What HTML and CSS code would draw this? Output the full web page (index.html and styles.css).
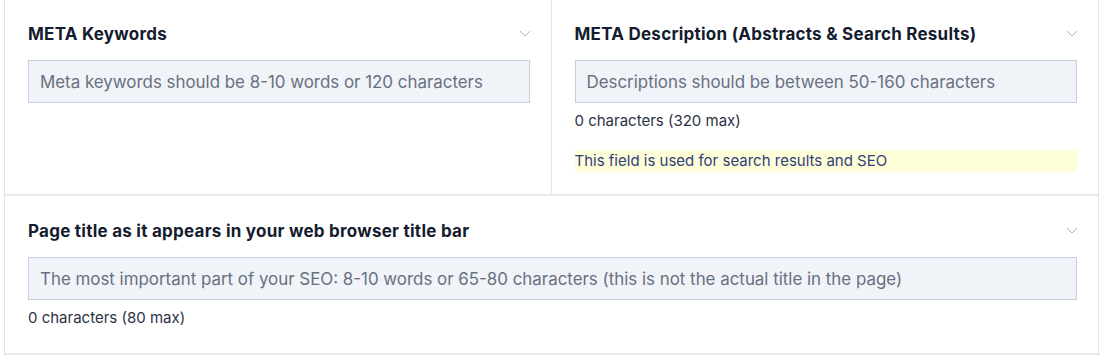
FILE: index.html
```html
<!DOCTYPE html>
<html lang="en">
  <head>
    <meta charset="UTF-8" />
    <meta name="viewport" content="width=device-width, initial-scale=1.0" />
    <title>SEO Settings</title>
    <link rel="stylesheet" href="styles.css">
  </head>
  <body>
    <div class="seo-box">
      <div class="seo-row">
        <div class="panel panel-left">
          <div class="panel-head">
            <h3>META Keywords</h3>
            <svg class="chevron" viewBox="0 0 12 7" width="12" height="7"><path d="M1 1l5 5 5-5" /></svg>
          </div>
          <input type="text" class="field" placeholder="Meta keywords should be 8-10 words or 120 characters" />
        </div>
        <div class="panel">
          <div class="panel-head">
            <h3>META Description (Abstracts &amp; Search Results)</h3>
            <svg class="chevron" viewBox="0 0 12 7" width="12" height="7"><path d="M1 1l5 5 5-5" /></svg>
          </div>
          <input type="text" class="field" placeholder="Descriptions should be between 50-160 characters" />
          <p class="count">0 characters (320 max)</p>
          <p class="hint">This field is used for search results and SEO</p>
        </div>
      </div>
      <div class="panel panel-wide">
        <div class="panel-head">
          <h3>Page title as it appears in your web browser title bar</h3>
          <svg class="chevron" viewBox="0 0 12 7" width="12" height="7"><path d="M1 1l5 5 5-5" /></svg>
        </div>
        <input type="text" class="field" placeholder="The most important part of your SEO: 8-10 words or 65-80 characters (this is not the actual title in the page)" />
        <p class="count">0 characters (80 max)</p>
      </div>
    </div>
  </body>
</html>
```

FILE: styles.css
```css
body {
  font-family: "Inter", "Liberation Sans", sans-serif;
  background-color: white;
  margin: 0;
  color: #1a2236;
}
.seo-box {
  margin-left: 4px;
  border-left: 1px solid #dfe5ee;
  border-right: 1px solid #dfe5ee;
}
.seo-row {
  display: grid;
  grid-template-columns: 1fr 1fr;
  border-bottom: 2px solid #e6eaf1;
}
.panel {
  padding: 22px 21px 22px 23px;
}
.panel-left {
  border-right: 1px solid #dfe5ee;
  padding-right: 21px;
}
.panel-wide {
  border-bottom: 2px solid #e6eaf1;
  padding-top: 23px;
  padding-bottom: 26px;
}
.panel-head {
  display: flex;
  justify-content: space-between;
  align-items: center;
  height: 24px;
  margin-bottom: 14px;
}
h3 {
  margin: 0;
  font-size: 17px;
  font-weight: 700;
  letter-spacing: 0.25px;
  color: #141c2e;
}
.chevron {
  fill: none;
  stroke: #a9b2c0;
  stroke-width: 1;
  margin-right: -1px;
  margin-top: -2px;
}
.field {
  display: block;
  box-sizing: border-box;
  width: 100%;
  height: 43px;
  padding: 0 11px;
  font-family: inherit;
  font-size: 16.9px;
  background-color: #f0f3f8;
  border: 1px solid #c3cfe2;
  border-radius: 0;
  color: #1a2236;
}
.field::placeholder {
  color: #687080;
}
.count {
  margin: 9px 0 0;
  font-size: 15px;
  line-height: 18px;
  color: #2b3343;
}
.hint {
  margin: 20px 0 0;
  padding: 2px 0;
  font-size: 15px;
  line-height: 18px;
  background-color: #fefed9;
  color: #34407a;
}
```
